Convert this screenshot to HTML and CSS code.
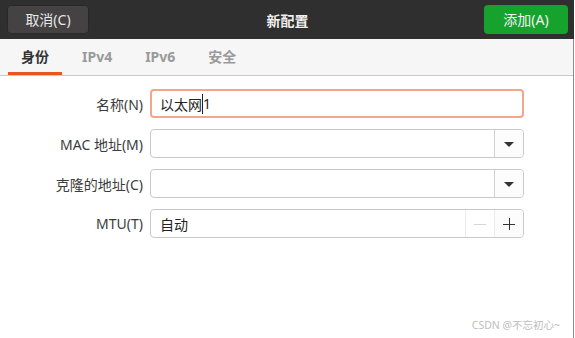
FILE: index.html
```html
<!DOCTYPE html>
<html lang="zh-CN">
<head>
  <meta charset="UTF-8">
  <title>新配置</title>
  <link rel="stylesheet" href="styles.css">
</head>
<body>
  <div class="window">
    <div class="header">
      <button class="btn-cancel">取消(C)</button>
      <div class="title">新配置</div>
      <button class="btn-add">添加(A)</button>
    </div>

    <div class="tabs">
      <div class="tab active">身份</div>
      <div class="tab">IPv4</div>
      <div class="tab">IPv6</div>
      <div class="tab">安全</div>
    </div>

    <div class="form">
      <label class="label">名称(N)</label>
      <div class="field focus">
        <span class="value">以太网<span class="caret"></span>1</span>
      </div>

      <label class="label">MAC 地址(M)</label>
      <div class="field">
        <span class="value"></span>
        <span class="side-btn"><span class="arrow"></span></span>
      </div>

      <label class="label">克隆的地址(C)</label>
      <div class="field">
        <span class="value"></span>
        <span class="side-btn"><span class="arrow"></span></span>
      </div>

      <label class="label">MTU(T)</label>
      <div class="field">
        <span class="value">自动</span>
        <span class="side-btn minus">
          <svg width="12" height="12" viewBox="0 0 12 12"><path d="M0 6.5h12" stroke="#d4d4d4" stroke-width="1"/></svg>
        </span>
        <span class="side-btn plus">
          <svg width="12" height="12" viewBox="0 0 12 12"><path d="M0 6.5h12M6.5 0v12" stroke="#333" stroke-width="1"/></svg>
        </span>
      </div>
    </div>

    <div class="watermark">CSDN @不忘初心~</div>
  </div>
</body>
</html>
```

FILE: styles.css
```css
body {
  margin: 0;
  background: white;
  font-family: "Noto Sans", "Noto Sans CJK SC", sans-serif;
  color: #3c3c3c;
}

.window {
  width: 574px;
  height: 338px;
  display: flex;
  flex-direction: column;
  box-sizing: border-box;
  border-right: 1px solid #8c8c8c;
}

.header {
  height: 39px;
  background: #302f2f;
  display: flex;
  align-items: center;
  justify-content: space-between;
  padding: 0 6px 0 7px;
  margin-right: -1px;
  flex-shrink: 0;
}

.header button {
  height: 29px;
  border: none;
  border-radius: 4px;
  font-family: inherit;
  font-size: 14px;
  padding: 0;
  margin-top: -1px;
}

.btn-cancel {
  width: 82px;
  background: #444242;
  color: #e8e8e8;
  box-shadow: inset 0 0 0 1px #2a2929;
}

.btn-add {
  width: 84px;
  background: #15a22d;
  color: #f2f2f2;
}

.title {
  color: #f0f0f0;
  font-size: 14px;
  font-weight: bold;
  margin-left: 2px;
}

.tabs {
  height: 36px;
  background: #f6f6f6;
  border-bottom: 1px solid #c9c9c9;
  display: flex;
  padding-left: 8px;
  flex-shrink: 0;
}

.tab {
  font-size: 14px;
  font-weight: bold;
  color: #9a9a9a;
  padding: 0 13px;
  line-height: 36px;
  box-sizing: border-box;
  min-width: 54px;
  text-align: center;
  margin-right: 7px;
}

.tab.active {
  color: #333;
  border-bottom: 3px solid #e95420;
  line-height: 35px;
  height: 36px;
}

.form {
  display: grid;
  grid-template-columns: 136px 374px;
  column-gap: 7px;
  row-gap: 11px;
  padding: 13px 0 0 7px;
}

.label {
  font-size: 14px;
  text-align: right;
  align-self: center;
  color: #3c3c3c;
}

.field {
  height: 29px;
  box-sizing: border-box;
  border: 1px solid #c9c9c9;
  border-radius: 4px;
  display: flex;
  align-items: stretch;
  background: white;
}

.field.focus {
  border: 2px solid #f2a68b;
}

.value {
  flex: 1;
  font-size: 14px;
  color: #222;
  padding-left: 9px;
  display: flex;
  align-items: center;
}

.field.focus .value {
  padding-left: 8px;
}

.caret {
  display: inline-block;
  width: 1px;
  height: 20px;
  background: #222;
}

.side-btn {
  width: 28px;
  border-left: 1px solid #cfcfcf;
  background: #fcfcfc;
  display: flex;
  align-items: center;
  justify-content: center;
}

.side-btn:last-child {
  border-radius: 0 3px 3px 0;
}

.side-btn.minus {
  border-left-color: #ececec;
  background: white;
}

.side-btn.plus {
  border-left-color: #ececec;
}

.arrow {
  width: 0;
  height: 0;
  border-left: 5px solid transparent;
  border-right: 5px solid transparent;
  border-top: 5px solid #333;
  margin-top: 1px;
}

.watermark {
  margin-top: auto;
  align-self: flex-end;
  font-size: 10.5px;
  color: #bdbdbd;
  padding: 0 13px 6px 0;
}
```
